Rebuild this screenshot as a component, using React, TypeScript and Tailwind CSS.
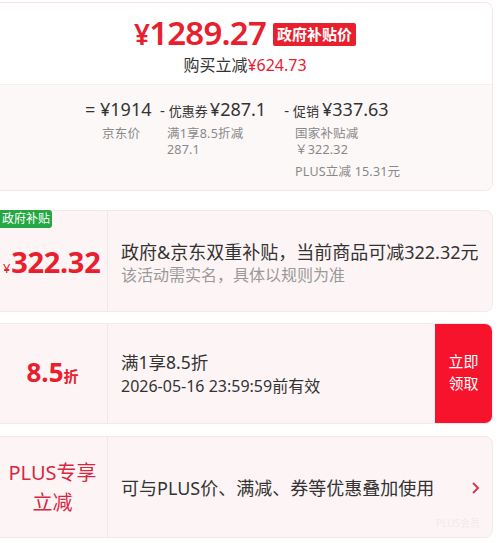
import React from 'react'

const font = { fontFamily: '"Noto Sans", "Noto Sans CJK SC", sans-serif' }

const App = () => {
  return (
    <div className="w-[500px] h-[543px] bg-white overflow-hidden text-[#333]" style={font}>
      {/* price summary */}
      <div className="mt-[2px] w-[493px] border border-l-0 border-[#f6e6e8] rounded-r-lg overflow-hidden">
        <div className="h-[81px] bg-white flex flex-col items-center pt-[10px]">
          <div className="flex items-center gap-[7px] ml-[-2px]">
            <span className="text-[#e8202e] text-[33px] leading-[40px] font-semibold tracking-[-0.8px]">
              <span className="text-[28px]">¥</span>1289.27
            </span>
            <span className="bg-[#e8202e] text-white text-[15px] font-bold leading-[23px] px-[4px] rounded-[2px] mt-[2px]">政府补贴价</span>
          </div>
          <div className="text-[16px] leading-[22px] ml-[-2px]">
            购买立减<span className="text-[#e8202e]">¥624.73</span>
          </div>
        </div>
        <div className="h-[106px] bg-[#fdf8f8] border-t border-[#f7eeee] pt-[11px] pl-[85px]">
          <div className="flex items-baseline text-[#333]">
            <span className="text-[18px] w-[15px]">=</span>
            <span className="text-[18px] leading-[24px] w-[60px]">¥1914</span>
            <span className="text-[15px] mr-[4px]">-</span>
            <span className="text-[13px]">优惠券</span>
            <span className="text-[18px] leading-[24px] ml-[2px]">¥287.1</span>
            <span className="text-[15px] ml-[18px] mr-[4px]">-</span>
            <span className="text-[13px]">促销</span>
            <span className="text-[18px] leading-[24px] ml-[3px]">¥337.63</span>
          </div>
          <div className="flex text-[12.5px] leading-[15px] tracking-[0.2px] text-[#888] mt-[3px]">
            <div className="w-[82px] pl-[17px]">京东价</div>
            <div className="w-[128px] flex flex-col gap-[1px]">
              <span>满1享8.5折减</span>
              <span>287.1</span>
            </div>
            <div className="flex flex-col gap-[1px]">
              <span>国家补贴减</span>
              <span>￥322.32</span>
              <span className="mt-[6px]">PLUS立减 15.31元</span>
            </div>
          </div>
        </div>
      </div>

      {/* government subsidy */}
      <div className="mt-[19px] w-[493px] h-[102px] bg-[#fdf5f5] border border-l-0 border-[#f6e8ea] rounded-r-lg flex relative">
        <span className="absolute left-0 top-[-1px] bg-[#25a744] text-white text-[12px] leading-[18px] px-[2px] rounded-r-[3px]">政府补贴</span>
        <div className="w-[108px] border-r border-[#f3e6e6] flex items-center pt-[8px] pl-[3px]">
          <span className="text-[#e8202e] font-bold text-[29px] leading-[32px] tracking-[-0.3px]">
            <span className="text-[13px] font-normal mr-[1px]">¥</span>322.32
          </span>
        </div>
        <div className="flex-1 flex flex-col justify-center pl-[13px] pt-[4px]">
          <div className="text-[18px] leading-[24px] text-[#333] whitespace-nowrap">政府&amp;京东双重补贴，当前商品可减322.32元</div>
          <div className="text-[16px] leading-[22px] text-[#999]">该活动需实名，具体以规则为准</div>
        </div>
      </div>

      {/* coupon */}
      <div className="mt-[11px] w-[493px] h-[101px] bg-[#fdf5f5] border border-l-0 border-[#f6e8ea] rounded-r-lg flex overflow-hidden">
        <div className="w-[108px] border-r border-[#f3e6e6] flex items-center justify-center pr-[2px]">
          <span className="text-[#e8202e] font-bold text-[26px] leading-[30px]">
            8.5<span className="text-[15px]">折</span>
          </span>
        </div>
        <div className="flex-1 flex flex-col justify-center pl-[13px]">
          <div className="text-[17.5px] leading-[25px] text-[#333]">满1享8.5折</div>
          <div className="text-[16px] leading-[23px] text-[#333]">2026-05-16 23:59:59前有效</div>
        </div>
        <div className="w-[57px] bg-[#f7132b] text-white text-[15px] leading-[22px] flex flex-col items-center justify-center pb-[4px]">
          <span>立即</span>
          <span>领取</span>
        </div>
      </div>

      {/* plus */}
      <div className="mt-[12px] w-[493px] h-[102px] bg-[#fdf5f5] border border-l-0 border-[#f6e8ea] rounded-r-lg flex relative">
        <div className="w-[108px] border-r border-[#f3e6e6] flex flex-col items-center justify-center text-[#d92641] text-[20px] leading-[30px] pt-[2px] pr-[2px]">
          <span>PLUS专享</span>
          <span>立减</span>
        </div>
        <div className="flex-1 flex items-center pl-[13px] pt-[2px] text-[18px] text-[#333]">
          可与PLUS价、满减、券等优惠叠加使用
        </div>
        <div className="flex items-center pr-[11px] pt-[2px]">
          <svg width="10" height="14" viewBox="0 0 10 14">
            <path d="M2 2 L7 7 L2 12" stroke="#d23a4e" strokeWidth="2" fill="none" />
          </svg>
        </div>
        <span className="absolute right-[12px] bottom-[6px] text-[10px] text-[#f3e9ea]">PLUS会员</span>
      </div>
    </div>
  )
}

export default App
